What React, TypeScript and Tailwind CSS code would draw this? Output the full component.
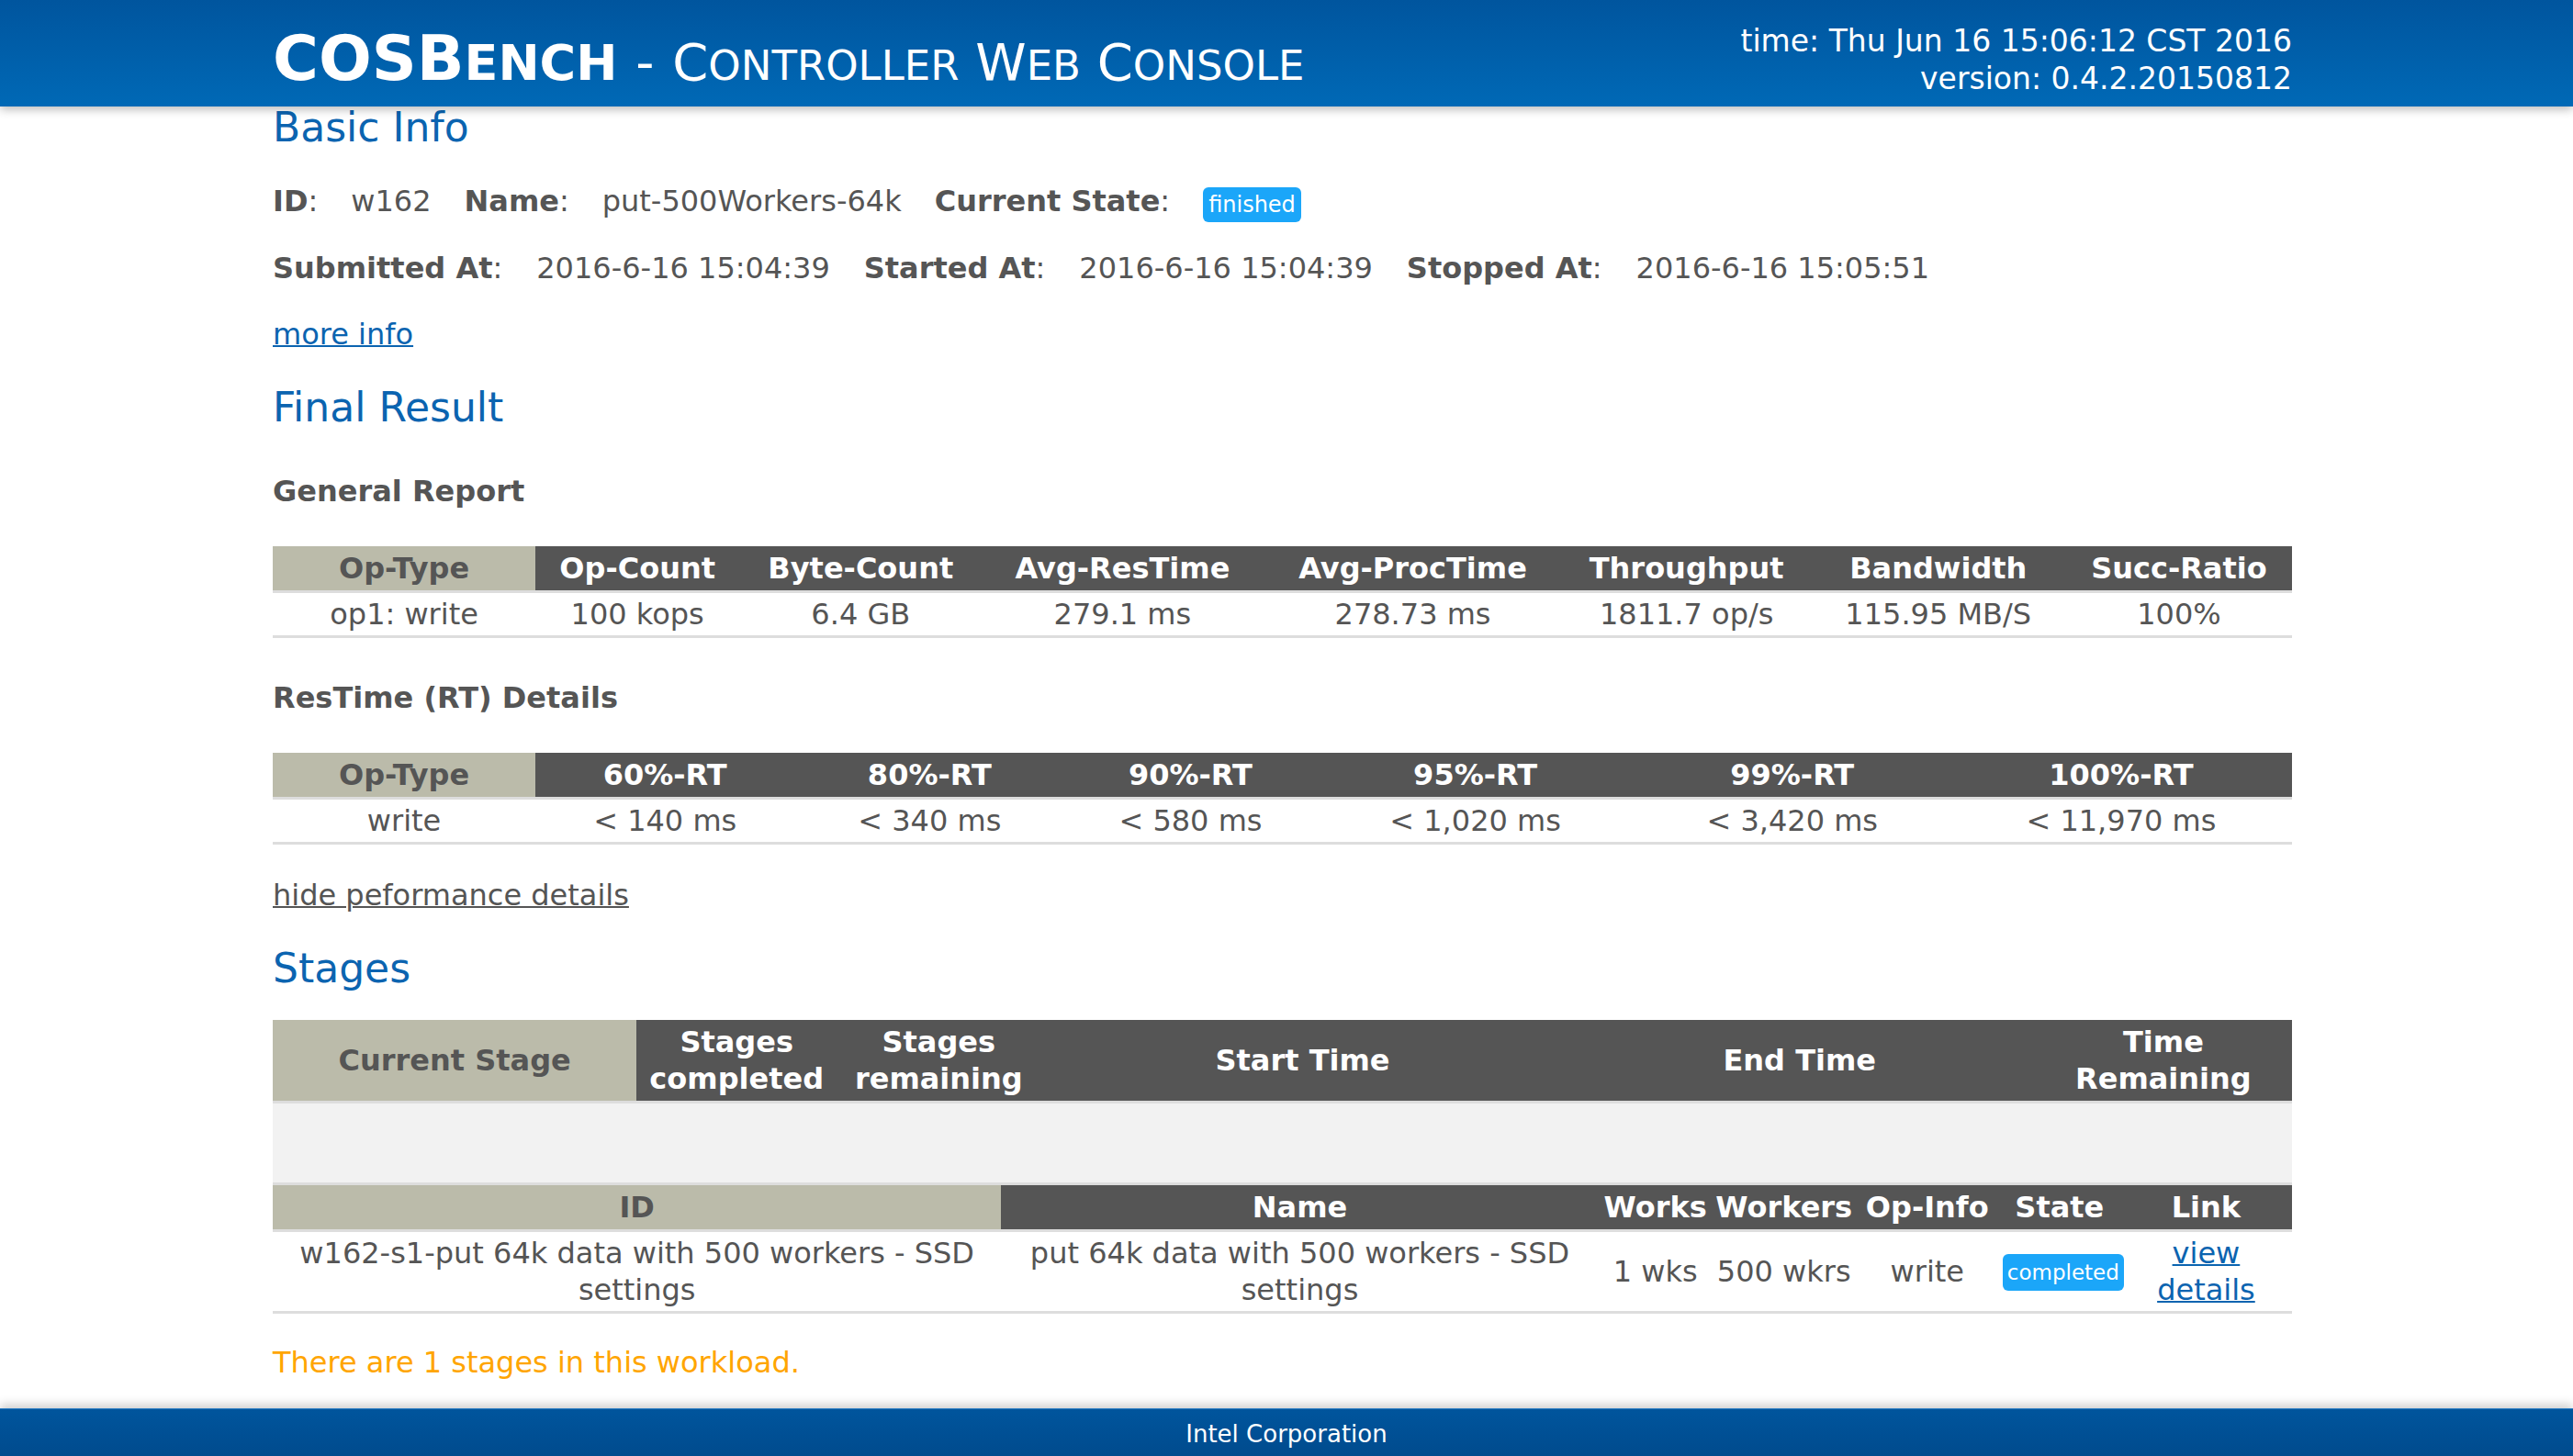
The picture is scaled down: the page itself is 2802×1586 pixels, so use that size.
import React from 'react';

const headBase = 'h-[48px] px-[4px] py-[4px] leading-[40px] font-bold border-b-[3px] border-[#dddddd]';
const headDark = `${headBase} bg-[#555555] text-white`;
const headLight = `${headBase} bg-[#bbbbaa] text-[#555555]`;
const cell = 'px-[4px] py-[3px] leading-[40px] text-center border-b-[3px] border-[#dddddd]';

function Header() {
  return (
    <header className="relative z-10 h-[116px] bg-linear-to-b from-[#00559e] to-[#0069b6] pr-[9px] shadow-[0_3px_10px_rgba(0,0,0,0.28)]">
      <div className="mx-auto flex w-[2199px] justify-between text-white">
        <h1 className="whitespace-nowrap pt-[30px] leading-[68px]">
          <span className="text-[68px] font-bold">COSB</span>
          <span className="text-[54px] font-bold uppercase">ench</span>
          <span className="mx-[2px] text-[56px]"> - </span>
          <span className="text-[56px]">C</span>
          <span className="text-[45px] uppercase">ontroller</span>
          <span className="text-[56px]"> W</span>
          <span className="text-[45px] uppercase">eb</span>
          <span className="text-[56px]"> C</span>
          <span className="text-[45px] uppercase">onsole</span>
        </h1>
        <div className="pt-[24px] text-right text-[33px] leading-[41px]">
          <div>time: Thu Jun 16 15:06:12 CST 2016</div>
          <div>version: 0.4.2.20150812</div>
        </div>
      </div>
    </header>
  );
}

function Field({ label, children }: { label: string; children: React.ReactNode }) {
  return (
    <>
      <span>
        <b>{label}</b>:
      </span>
      <span>{children}</span>
    </>
  );
}

function Badge({ children }: { children: React.ReactNode }) {
  return (
    <span className="inline-flex h-[38px] items-center rounded-[6px] bg-[#1ba6f9] px-[6px] text-[24px] leading-none text-white">
      {children}
    </span>
  );
}

const generalCols = [286, 222, 264, 306, 326, 270, 278, 246];
const generalHead = ['Op-Type', 'Op-Count', 'Byte-Count', 'Avg-ResTime', 'Avg-ProcTime', 'Throughput', 'Bandwidth', 'Succ-Ratio'];
const generalRow = ['op1: write', '100 kops', '6.4 GB', '279.1 ms', '278.73 ms', '1811.7 op/s', '115.95 MB/S', '100%'];

const rtCols = [286, 282, 294, 274, 346, 344, 372];
const rtHead = ['Op-Type', '60%-RT', '80%-RT', '90%-RT', '95%-RT', '99%-RT', '100%-RT'];
const rtRow = ['write', '< 140 ms', '< 340 ms', '< 580 ms', '< 1,020 ms', '< 3,420 ms', '< 11,970 ms'];

function SimpleTable({ cols, head, row }: { cols: number[]; head: string[]; row: string[] }) {
  return (
    <table className="w-full table-fixed border-separate border-spacing-0">
      <colgroup>
        {cols.map((w, i) => (
          <col key={i} style={{ width: w }} />
        ))}
      </colgroup>
      <thead>
        <tr>
          {head.map((h, i) => (
            <th key={h} className={`whitespace-nowrap ${i === 0 ? headLight : headDark}`}>
              {h}
            </th>
          ))}
        </tr>
      </thead>
      <tbody>
        <tr>
          {row.map((v, i) => (
            <td key={i} className={cell}>
              {v}
            </td>
          ))}
        </tr>
      </tbody>
    </table>
  );
}

function StagesTable() {
  const th = 'px-[4px] py-[4px] leading-[40px] font-bold border-b-[3px] border-[#dddddd] bg-[#555555] text-white';
  return (
    <>
      <table className="w-full table-fixed border-separate border-spacing-0">
        <colgroup>
          <col className="w-[396px]" />
          <col className="w-[218px]" />
          <col className="w-[222px]" />
          <col className="w-[570px]" />
          <col className="w-[512px]" />
          <col className="w-[280px]" />
        </colgroup>
        <thead>
          <tr>
            <th className="px-[4px] py-[4px] leading-[40px] font-bold border-b-[3px] border-[#dddddd] bg-[#bbbbaa] text-[#555555]">
              Current Stage
            </th>
            <th className={th}>Stages completed</th>
            <th className={th}>Stages remaining</th>
            <th className={th}>Start Time</th>
            <th className={th}>End Time</th>
            <th className={th}>Time Remaining</th>
          </tr>
        </thead>
        <tbody>
          <tr>
            {[0, 1, 2, 3, 4, 5].map((i) => (
              <td key={i} className="h-[89px] bg-[#f2f2f2] border-b-[3px] border-[#dddddd]"></td>
            ))}
          </tr>
        </tbody>
      </table>

      <table className="w-full table-fixed border-separate border-spacing-0">
        <colgroup>
          <col className="w-[793px]" />
          <col className="w-[650px]" />
          <col className="w-[124px]" />
          <col className="w-[156px]" />
          <col className="w-[156px]" />
          <col className="w-[132px]" />
          <col className="w-[187px]" />
        </colgroup>
        <thead>
          <tr>
            <th className={headLight}>ID</th>
            <th className={headDark}>Name</th>
            <th className={`${headDark} whitespace-nowrap !px-0`}>Works</th>
            <th className={`${headDark} whitespace-nowrap !px-0`}>Workers</th>
            <th className={`${headDark} whitespace-nowrap !px-0`}>Op-Info</th>
            <th className={`${headDark} whitespace-nowrap !px-0`}>State</th>
            <th className={headDark}>Link</th>
          </tr>
        </thead>
        <tbody>
          <tr>
            <td className={`${cell} !py-[2px]`}>w162-s1-put 64k data with 500 workers - SSD settings</td>
            <td className={`${cell} !py-[2px]`}>put 64k data with 500 workers - SSD settings</td>
            <td className={`${cell} whitespace-nowrap`}>1 wks</td>
            <td className={`${cell} whitespace-nowrap`}>500 wkrs</td>
            <td className={cell}>write</td>
            <td className={cell}>
              <span className="inline-flex h-[40px] items-center rounded-[6px] bg-[#1ba6f9] px-[5px] align-middle text-[23px] leading-none text-white">
                completed
              </span>
            </td>
            <td className={`${cell} px-[10px]`}>
              <a href="#" className="text-[#0b64b0] underline decoration-2">
                view details
              </a>
            </td>
          </tr>
        </tbody>
      </table>
    </>
  );
}

function Footer() {
  return (
    <footer className="relative h-[56px] border-t border-[#2f7fc4] bg-linear-to-b from-[#00559d] to-[#004a8c] text-center text-[26px] leading-[54px] text-white shadow-[0_-4px_10px_rgba(0,0,0,0.2)]">
      Intel Corporation
    </footer>
  );
}

export default function App() {
  return (
    <div className="flex min-h-screen flex-col bg-white text-[32px] text-[#555555] [font-family:'DejaVu_Sans',Verdana,sans-serif]">
      <Header />
      <main className="flex-1 pr-[9px]">
        <div className="mx-auto w-[2199px] pb-[30px]">
          <h2 className="text-[44px] leading-[46px] text-[#0b64b0]">Basic Info</h2>

          <div className="mt-[36px] flex items-center gap-[36px] leading-[40px]">
            <Field label="ID">w162</Field>
            <Field label="Name">put-500Workers-64k</Field>
            <span>
              <b>Current State</b>:
            </span>
            <span className="translate-y-[2px]">
              <Badge>finished</Badge>
            </span>
          </div>

          <div className="mt-[32px] flex items-center gap-[37px] leading-[40px]">
            <Field label="Submitted At">2016-6-16 15:04:39</Field>
            <Field label="Started At">2016-6-16 15:04:39</Field>
            <Field label="Stopped At">2016-6-16 15:05:51</Field>
          </div>

          <div className="mt-[32px] leading-[40px]">
            <a href="#" className="text-[#0b64b0] underline decoration-2">
              more info
            </a>
          </div>

          <h2 className="mt-[37px] text-[44px] leading-[46px] text-[#0b64b0]">Final Result</h2>

          <h4 className="mt-[48px] text-[32px] font-bold leading-[40px]">General Report</h4>
          <div className="mt-[40px]">
            <SimpleTable cols={generalCols} head={generalHead} row={generalRow} />
          </div>

          <h4 className="mt-[45px] text-[32px] font-bold leading-[40px]">ResTime (RT) Details</h4>
          <div className="mt-[40px]">
            <SimpleTable cols={rtCols} head={rtHead} row={rtRow} />
          </div>

          <div className="mt-[35px] leading-[40px]">
            <a href="#" className="text-[#555555] underline decoration-2">
              hide peformance details
            </a>
          </div>

          <h2 className="mt-[37px] text-[44px] leading-[46px] text-[#0b64b0]">Stages</h2>

          <div className="mt-[33px]">
            <StagesTable />
          </div>

          <p className="mt-[33px] leading-[40px] text-[#ffa500]">There are 1 stages in this workload.</p>
        </div>
      </main>
      <Footer />
    </div>
  );
}
